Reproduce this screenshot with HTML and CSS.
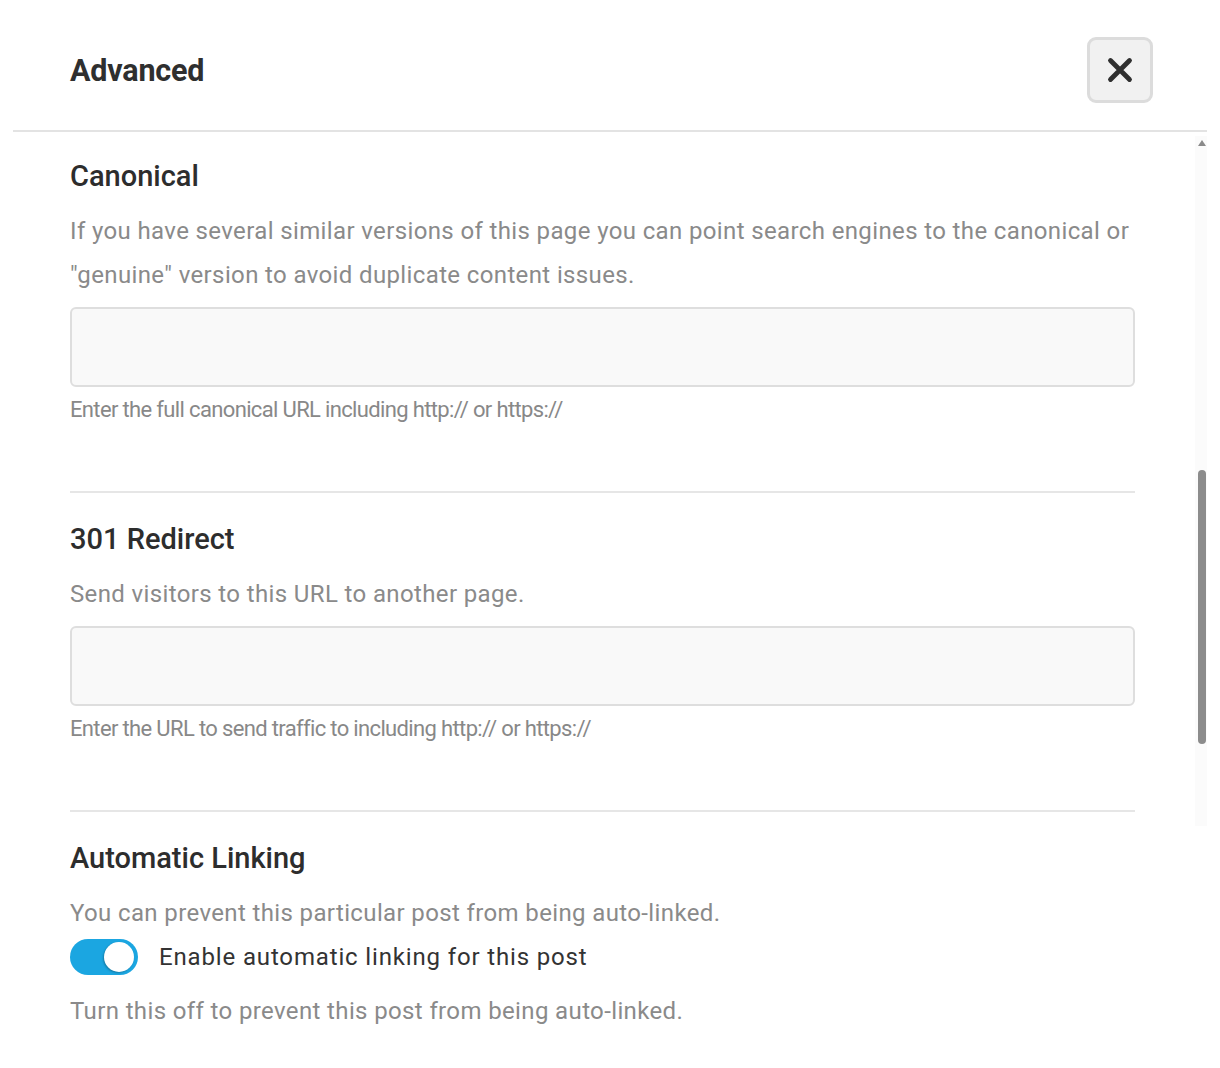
FILE: index.html
```html
<!DOCTYPE html>
<html lang="en">
<head>
<meta charset="utf-8">
<title>Advanced</title>
<link rel="stylesheet" href="styles.css">
</head>
<body>
<div class="modal">
  <header class="modal-header">
    <h1 class="modal-title">Advanced</h1>
    <button class="close-btn" type="button" aria-label="Close">
      <svg width="26" height="26" viewBox="0 0 26 26"><path d="M3.5 3.5 L22.5 22.5 M22.5 3.5 L3.5 22.5" stroke="#2f2f2f" stroke-width="4.8" stroke-linecap="round" fill="none"/></svg>
    </button>
  </header>
  <div class="modal-body">
    <section class="section first">
      <h2 class="section-title">Canonical</h2>
      <p class="desc">If you have several similar versions of this page you can point search engines to the canonical or "genuine" version to avoid duplicate content issues.</p>
      <input class="field" type="text">
      <p class="help">Enter the full canonical URL including http:// or https://</p>
    </section>
    <section class="section">
      <h2 class="section-title">301 Redirect</h2>
      <p class="desc">Send visitors to this URL to another page.</p>
      <input class="field" type="text">
      <p class="help">Enter the URL to send traffic to including http:// or https://</p>
    </section>
    <section class="section last">
      <h2 class="section-title">Automatic Linking</h2>
      <p class="desc">You can prevent this particular post from being auto-linked.</p>
      <label class="toggle-row">
        <span class="toggle"><span class="knob"></span></span>
        <span class="toggle-label">Enable automatic linking for this post</span>
      </label>
      <p class="desc after">Turn this off to prevent this post from being auto-linked.</p>
    </section>
    <div class="scrollbar" aria-hidden="true">
      <span class="arrow"></span>
      <span class="thumb"></span>
    </div>
  </div>
</div>
</body>
</html>
```

FILE: styles.css
```css
* { box-sizing: border-box; }
html, body { margin: 0; padding: 0; background: #fff; }
body {
  font-family: Roboto, "Liberation Sans", Arial, sans-serif;
  color: #333;
}
.modal {
  margin-left: 13px;
  width: 1194px;
  background: #fff;
}
.modal-header {
  height: 132px;
  display: flex;
  align-items: center;
  justify-content: space-between;
  padding: 10px 54px 0 57px;
  border-bottom: 2px solid #e3e3e3;
}
.modal-title {
  margin: 0;
  font-size: 30.5px;
  font-weight: 700;
  color: #2f2f2f;
  letter-spacing: -0.2px;
}
.close-btn {
  width: 66px;
  height: 66px;
  margin-top: -1px;
  border: 3px solid #dcdcdc;
  border-radius: 9px;
  background: #f1f1f1;
  display: flex;
  align-items: center;
  justify-content: center;
  padding: 0;
  cursor: pointer;
}
.modal-body {
  position: relative;
  padding: 0 72px 0 57px;
}
.section {
  padding: 29px 0 66px;
  border-bottom: 2px solid #e6e6e6;
}
.section.first { padding-top: 27px; }
.section.last { border-bottom: 0; padding-bottom: 30px; }
.section-title {
  margin: 0;
  font-size: 29px;
  line-height: 35px;
  font-weight: 500;
  color: #2d2d2d;
}
.desc {
  margin: 15px 0 0;
  font-size: 24px;
  line-height: 44px;
  letter-spacing: 0.37px;
  color: #8a8a8a;
}
.desc.after { margin-top: 10px; }
.field {
  display: block;
  width: 100%;
  height: 80px;
  margin-top: 10px;
  border: 2px solid #dedede;
  border-radius: 6px;
  background: #f9f9f9;
  font: inherit;
}
.help {
  margin: 8px 0 0;
  font-size: 22px;
  line-height: 30px;
  letter-spacing: -0.65px;
  color: #888;
}
.toggle-row {
  display: flex;
  align-items: center;
  gap: 21px;
  height: 44px;
}
.toggle {
  width: 68px;
  height: 36px;
  border-radius: 18px;
  background: #1ba6e1;
  position: relative;
  flex: none;
}
.knob {
  position: absolute;
  top: 3px;
  right: 4px;
  width: 30px;
  height: 30px;
  border-radius: 50%;
  background: #fff;
  box-shadow: -1px 1px 2px rgba(0,0,0,0.25);
}
.toggle-label {
  font-size: 24px;
  letter-spacing: 0.85px;
  color: #333;
}
.scrollbar {
  position: absolute;
  top: 4px;
  right: 0;
  width: 12px;
  height: 690px;
  background: #fbfbfb;
}
.arrow {
  position: absolute;
  top: 4px;
  left: 3px;
  width: 0;
  height: 0;
  border-left: 4px solid transparent;
  border-right: 4px solid transparent;
  border-bottom: 6px solid #8a8a8a;
}
.thumb {
  position: absolute;
  top: 334px;
  left: 3px;
  width: 8px;
  height: 274px;
  border-radius: 4px;
  background: #8c8c8c;
}
```
